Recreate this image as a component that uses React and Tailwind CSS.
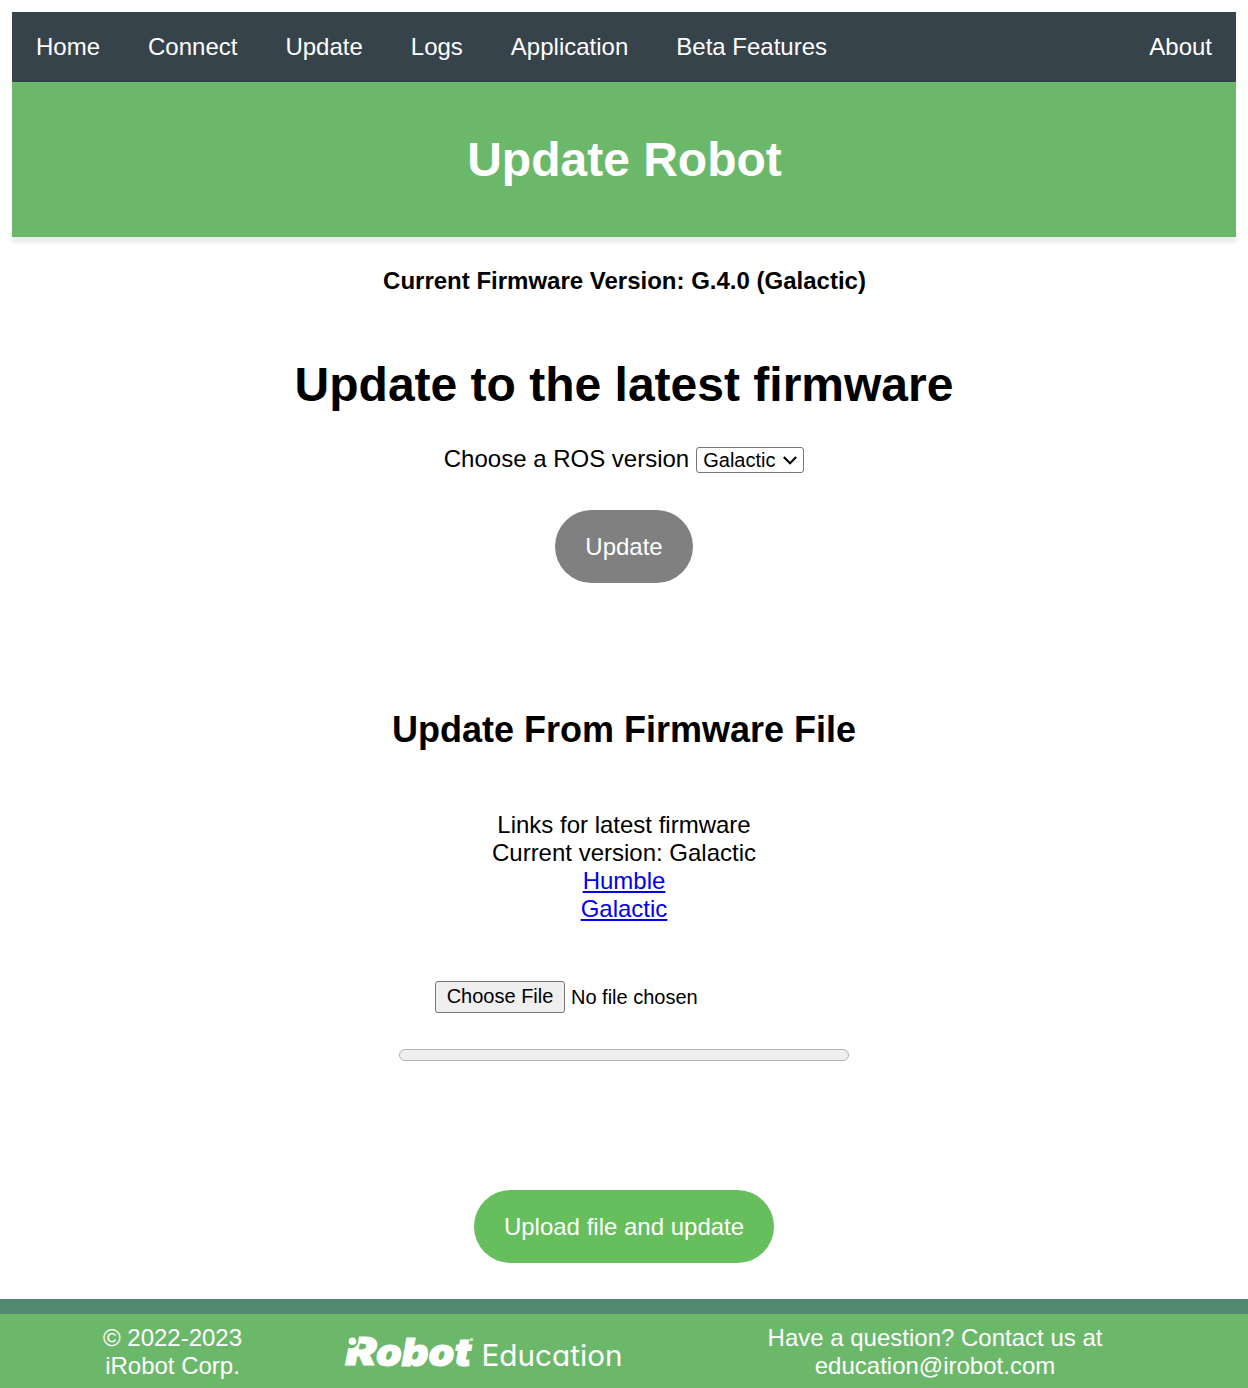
const links = ['Home', 'Connect', 'Update', 'Logs', 'Application', 'Beta Features'];

function Logo() {
  return (
    <svg width="284" height="46" viewBox="-2 -6 284 46" className="block overflow-visible" fill="#fff" role="img" aria-label="iRobot Education">
      <g fontFamily="Inter, sans-serif" fontWeight="900" fontStyle="italic" fontSize="38" stroke="#fff" strokeWidth="1">
        <text x="0.500" y="30" textLength="31" lengthAdjust="spacingAndGlyphs">R</text>
        <text x="31" y="30.500" textLength="95" lengthAdjust="spacingAndGlyphs">obot</text>
      </g>
      <path d="M0 -1 H14.500 L12.500 9.500 L9 13 H0 Z" fill="#6cb86b" />
      <circle cx="7.500" cy="6.200" r="3.800" />
      <circle cx="126.500" cy="4.500" r="1.800" opacity=".65" />
      <text x="136.500" y="31" fontFamily="Inter, sans-serif" fontWeight="400" fontSize="29.500" textLength="141" lengthAdjust="spacingAndGlyphs" style={{ fontFeatureSettings: '"cv11", "liga" 0' }}>Education</text>
    </svg>
  );
}

export default function App() {
  return (
    <div className="flex h-[1388px] w-[1248px] flex-col overflow-hidden bg-white font-['Liberation_Sans',Arial,sans-serif] text-[24px] leading-[28px] text-black">
      <div className="mx-3 mt-3 shadow-[0_6px_3px_rgba(54,67,75,0.1)]">
        <nav className="flex h-[70px] items-center bg-[#36434b] px-6 text-white">
          <div className="flex gap-12">
            {links.map((l) => <a key={l} href="#">{l}</a>)}
          </div>
          <a href="#" className="ml-auto">About</a>
        </nav>
        <header className="flex h-[155px] items-center justify-center bg-[#6cb86b] text-white">
          <h1 className="pl-px text-[48px] font-bold leading-[56px]">Update Robot</h1>
        </header>
      </div>
      <main className="flex flex-col items-center">
        <p className="mt-[30px] pl-px font-bold">Current Firmware Version: G.4.0 (Galactic)</p>
        <h1 className="mt-[62px] text-[48px] font-bold leading-[56px]">Update to the latest firmware</h1>
        <div className="mt-[32px] flex items-start">
          <span>Choose a ROS version</span>
          <button className="ml-[7px] mt-[2px] flex h-[26px] w-[108px] items-center rounded-[3px] border border-[#767676] pl-[6px] text-[20px] leading-[24px]">
            <span>Galactic</span>
            <svg width="14" height="9" viewBox="0 0 14 9" className="ml-[8px]" fill="none" stroke="#000" strokeWidth="2.200"><path d="M.8 1 7 7.200 13.200 1" /></svg>
          </button>
        </div>
        <button className="mt-[37px] h-[73px] w-[138px] rounded-[37px] bg-[#808080] text-white">Update</button>
        <h2 className="mt-[126px] text-[36px] font-bold leading-[42px]">Update From Firmware File</h2>
        <div className="mt-[60px] text-center">
          <p>Links for latest firmware</p>
          <p>Current version: Galactic</p>
          <p><a href="#" className="text-[#0000ee] underline">Humble</a></p>
          <p><a href="#" className="text-[#0000ee] underline">Galactic</a></p>
        </div>
        <div className="mt-[58px] flex w-[378px] items-center text-[20px] leading-[24px]">
          <button className="h-8 w-[130px] rounded-[3px] border border-[#767676] bg-[#efefef] pb-[2px]">Choose File</button>
          <span className="ml-[6px]">No file chosen</span>
        </div>
        <div className="mt-[36px] h-[12px] w-[450px] rounded-full border border-[#b2b2b2] bg-[#efefef]" />
        <button className="mt-[129px] h-[73px] w-[300px] rounded-[37px] bg-[#66bf5c] text-white">Upload file and update</button>
      </main>
      <footer className="mt-[36px] flex h-[89px] border-t-[15px] border-[#518a70] bg-[#6cb86b] pt-[10px] text-center text-white">
        <div className="ml-[72.5px] w-[200px]">© 2022-2023<br />iRobot Corp.</div>
        <div className="ml-[70.5px] mt-[5px] w-[284px]"><Logo /></div>
        <div className="ml-[108px] w-[400px]">Have a question? Contact us at<br />education@irobot.com</div>
      </footer>
    </div>
  );
}
